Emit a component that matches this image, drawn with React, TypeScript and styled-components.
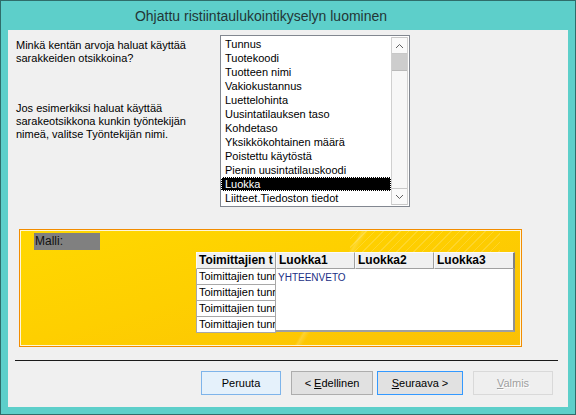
import React from 'react'
import styled, { createGlobalStyle, css } from 'styled-components'

const GlobalStyle = createGlobalStyle`
  html, body {
    margin: 0;
    padding: 0;
    background: #ffffff;
  }
  body {
    font-family: "Liberation Sans", Arial, sans-serif;
    overflow: hidden;
  }
`

const Window = styled.div`
  width: 576px;
  height: 415px;
  box-sizing: border-box;
  border: 1px solid #2f6d6a;
  background: #5dcfca;
  display: flex;
  flex-direction: column;
  padding: 0 7px 7px;
`

const TitleBar = styled.div`
  height: 29px;
  display: flex;
  align-items: center;
  justify-content: center;
  padding: 1px 54px 0 0;
  box-sizing: border-box;
  font-size: 14px;
  color: #233636;
`

const Client = styled.div`
  flex: 1;
  background: #f0f0f0;
  display: flex;
  flex-direction: column;
  font-size: 11px;
  color: #000;
`

const TopSection = styled.div`
  display: flex;
  padding: 5px 0 0 8px;
`

const Question = styled.div`
  width: 204px;
  padding-top: 4px;
  line-height: 13px;
`

const Paragraph = styled.p<{ $gap?: number }>`
  margin: 0 0 ${p => p.$gap ?? 0}px;
  width: 196px;
`

const ListBox = styled.div`
  width: 190px;
  height: 172px;
  box-sizing: border-box;
  border: 1px solid #828790;
  background: #fff;
  padding: 1px 1px 1px 0;
  display: flex;
`

const Items = styled.div`
  width: 170px;
  display: flex;
  flex-direction: column;
`

const Item = styled.div<{ $selected?: boolean }>`
  height: 14px;
  line-height: 14px;
  padding-left: 4px;
  white-space: nowrap;
  ${p => p.$selected && css`
    background: #000;
    color: #fff;
    outline: 1px dotted #fff;
    outline-offset: -1px;
  `}
`

const ScrollBar = styled.div`
  width: 17px;
  box-sizing: border-box;
  border-left: 1px solid #d0d0d0;
  border-right: 1px solid #d0d0d0;
  background: #f7f7f7;
  display: flex;
  flex-direction: column;
`

const ScrollButton = styled.div`
  height: 17px;
  box-sizing: border-box;
  border: 1px solid #c8c8c8;
  border-width: 1px 0;
  display: flex;
  align-items: center;
  justify-content: center;
  background: #fafafa;
`

const Thumb = styled.div`
  height: 17px;
  box-sizing: border-box;
  background: #cdcdcd;
  border: 1px solid #b9b9b9;
  border-width: 0 0 1px;
`

const Track = styled.div`
  flex: 1;
`

const SampleBox = styled.div`
  margin: 22px 0 0 11px;
  width: 503px;
  height: 118px;
  box-sizing: border-box;
  border: 1px solid #f28c00;
  box-shadow: inset 0 0 0 1px #fff6d8;
  padding: 3px 0 0 14px;
  background:
    repeating-linear-gradient(135deg, rgba(255,255,255,0.16) 0 1px, transparent 1px 6px) 330px 0 / 150px 22px no-repeat,
    linear-gradient(120deg, transparent 60%, rgba(255,255,255,0.18) 60.5%, transparent 61.5%),
    linear-gradient(165deg, #ffd800 0%, #fecf00 45%, #fbc006 100%);
`

const ModelLabel = styled.div`
  width: 66px;
  height: 17px;
  box-sizing: border-box;
  background: #808080;
  color: #111;
  font-size: 12px;
  line-height: 16px;
  padding-left: 1px;
`

const Grid = styled.div`
  margin: 2px 0 0 162px;
  width: 319px;
`

const HeadRow = styled.div`
  display: flex;
  height: 17px;
`

const HeadCell = styled.div<{ $w: number; $last?: boolean }>`
  width: ${p => p.$w}px;
  box-sizing: border-box;
  background: #f0f0f0;
  border-top: 1px solid #fafafa;
  border-left: 1px solid #fafafa;
  border-right: ${p => (p.$last ? '2px solid #808080' : '1px solid #a0a0a0')};
  border-bottom: 1px solid #a0a0a0;
  font-size: 12px;
  font-weight: bold;
  line-height: 15px;
  padding-left: 2px;
  white-space: nowrap;
  overflow: hidden;
`

const BodyRow = styled.div`
  display: flex;
`

const RowHeads = styled.div`
  width: 80px;
  display: flex;
  flex-direction: column;
`

const RowHead = styled.div`
  height: 16px;
  box-sizing: border-box;
  background: #fff;
  border: 1px solid #a8a8a8;
  border-top: 0;
  line-height: 14px;
  padding-left: 2px;
  white-space: nowrap;
  overflow: hidden;
`

const DataArea = styled.div`
  width: 239px;
  height: 63px;
  box-sizing: border-box;
  background: #fff;
  border-right: 2px solid #909090;
  border-bottom: 2px solid #a0a0a0;
  padding: 3px 2px;
  font-size: 10px;
  line-height: 12px;
  color: #1b2f86;
`

const Separator = styled.div`
  margin: 13px 0 0 7px;
  width: 543px;
  height: 1px;
  background: #1a1a1a;
`

const ButtonRow = styled.div`
  display: flex;
  gap: 10px;
  margin-top: 10px;
  padding-left: 193px;
`

const NavGroup = styled.div`
  display: flex;
  gap: 4px;
`

const variants = {
  hover: css`
    background: #e5f1fb;
    border-color: #7eb4ea;
  `,
  normal: css`
    background: #e1e1e1;
    border-color: #adadad;
  `,
  default: css`
    background: #e1e1e1;
    border-color: #3399ff;
  `,
  disabled: css`
    background: #efefef;
    border-color: #d9d9d9;
    color: #a0a0a0;
    text-shadow: 1px 1px 0 #fff;
  `,
}

const Button = styled.button<{ $w: number; $variant: keyof typeof variants }>`
  width: ${p => p.$w}px;
  height: 24px;
  box-sizing: border-box;
  border: 1px solid;
  padding: 0;
  font-family: "Liberation Sans", Arial, sans-serif;
  font-size: 11px;
  color: #000;
  ${p => variants[p.$variant]}
`

const Chevron = ({ up }: { up?: boolean }) => (
  <svg width="9" height="6" viewBox="0 0 9 6">
    <polyline
      points={up ? '1,5 4.5,1.5 8,5' : '1,1 4.5,4.5 8,1'}
      fill="none"
      stroke="#606060"
      strokeWidth="1"
    />
  </svg>
)

const fields = [
  'Tunnus',
  'Tuotekoodi',
  'Tuotteen nimi',
  'Vakiokustannus',
  'Luettelohinta',
  'Uusintatilauksen taso',
  'Kohdetaso',
  'Yksikkökohtainen määrä',
  'Poistettu käytöstä',
  'Pienin uusintatilauskoodi',
  'Luokka',
  'Liitteet.Tiedoston tiedot',
]

// the sample grid shows its first column cut short, as in the wizard
const headers = [
  { label: 'Toimittajien t', w: 80 },
  { label: 'Luokka1', w: 79 },
  { label: 'Luokka2', w: 79 },
  { label: 'Luokka3', w: 81 },
]

export default function App() {
  return (
    <>
      <GlobalStyle />
      <Window>
        <TitleBar>Ohjattu ristiintaulukointikyselyn luominen</TitleBar>
        <Client>
          <TopSection>
            <Question>
              <Paragraph $gap={37}>Minkä kentän arvoja haluat käyttää sarakkeiden otsikkoina?</Paragraph>
              <Paragraph>Jos esimerkiksi haluat käyttää sarakeotsikkona kunkin työntekijän nimeä, valitse Työntekijän nimi.</Paragraph>
            </Question>
            <ListBox>
              <Items>
                {fields.map(f => (
                  <Item key={f} $selected={f === 'Luokka'}>{f}</Item>
                ))}
              </Items>
              <ScrollBar>
                <ScrollButton><Chevron up /></ScrollButton>
                <Thumb />
                <Track />
                <ScrollButton><Chevron /></ScrollButton>
              </ScrollBar>
            </ListBox>
          </TopSection>

          <SampleBox>
            <ModelLabel>Malli:</ModelLabel>
            <Grid>
              <HeadRow>
                {headers.map((h, i) => (
                  <HeadCell key={h.label} $w={h.w} $last={i === headers.length - 1}>{h.label}</HeadCell>
                ))}
              </HeadRow>
              <BodyRow>
                <RowHeads>
                  {[0, 1, 2, 3].map(i => (
                    <RowHead key={i}>Toimittajien tunr</RowHead>
                  ))}
                </RowHeads>
                <DataArea>YHTEENVETO</DataArea>
              </BodyRow>
            </Grid>
          </SampleBox>

          <Separator />

          <ButtonRow>
            <Button $w={80} $variant="hover">Peruuta</Button>
            <NavGroup>
              <Button $w={82} $variant="normal">&lt; <u>E</u>dellinen</Button>
              <Button $w={86} $variant="default"><u>S</u>euraava &gt;</Button>
            </NavGroup>
            <Button $w={80} $variant="disabled" disabled><u>V</u>almis</Button>
          </ButtonRow>
        </Client>
      </Window>
    </>
  )
}
